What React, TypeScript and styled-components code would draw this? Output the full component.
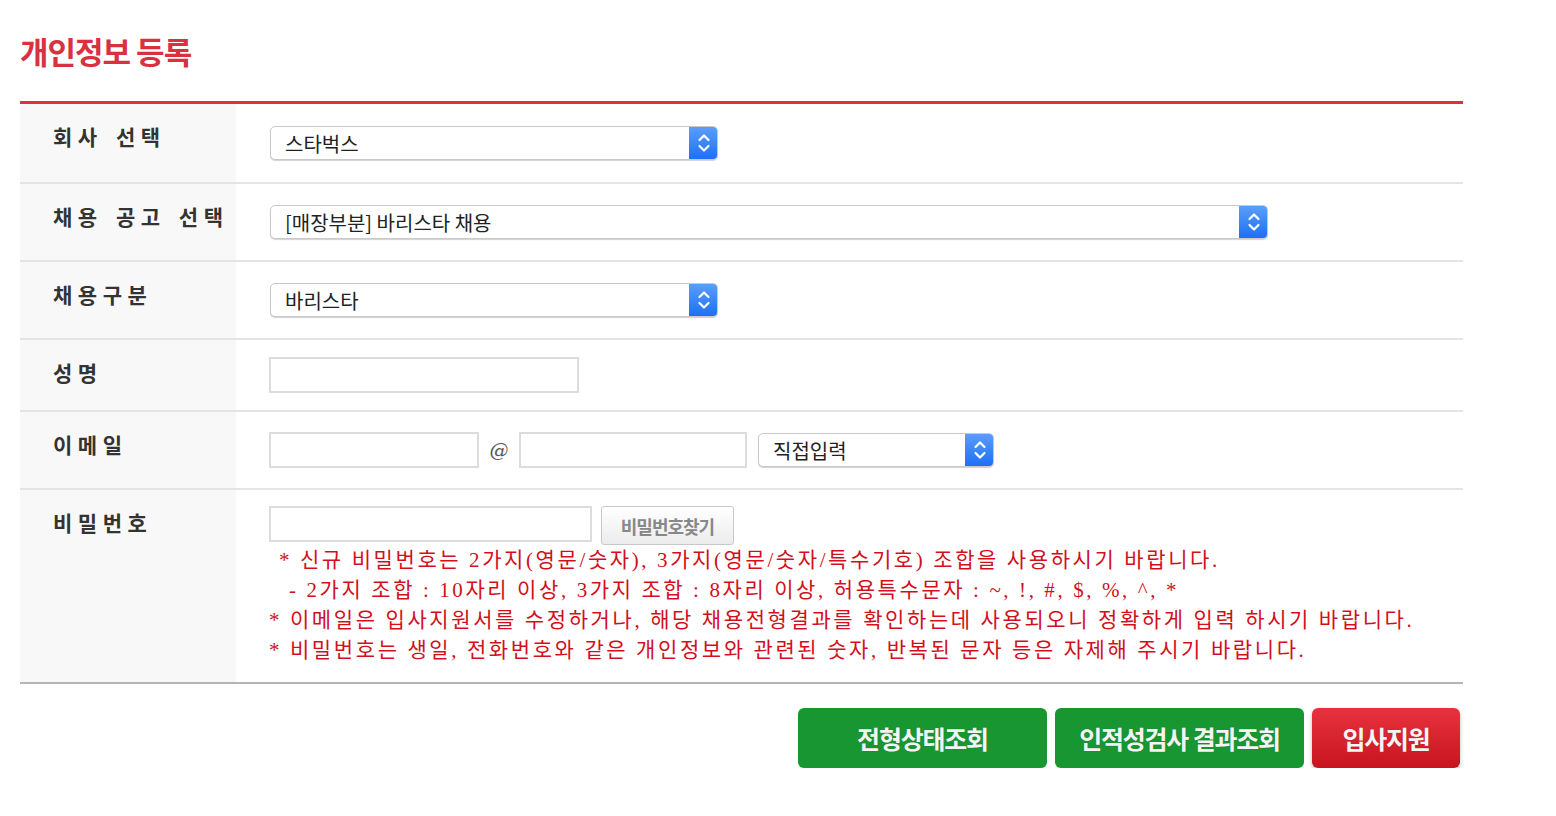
import React from "react";
import styled, { createGlobalStyle } from "styled-components";

const Global = createGlobalStyle`
  html, body { margin: 0; padding: 0; background: #fff; }
  body { font-family: "Noto Sans CJK KR", "Noto Sans", sans-serif; color: #222; }
  * { box-sizing: border-box; }
`;

const Page = styled.div`
  width: 1556px;
  padding: 0 0 0 20px;
`;

const Title = styled.h1`
  margin: 0;
  padding: 29px 0 0;
  height: 101px;
  font-size: 31px;
  line-height: 44px;
  font-weight: 700;
  letter-spacing: -1px;
  color: #d7323e;
`;

const Table = styled.div`
  width: 1443px;
  border-top: 3px solid #d7343f;
  border-bottom: 2px solid #b5b5b5;
`;

const Row = styled.div<{ $h: number; $last?: boolean }>`
  display: grid;
  grid-template-columns: 216px 1fr;
  height: ${(p) => p.$h}px;
  border-bottom: ${(p) => (p.$last ? "none" : "2px solid #e4e4e4")};
`;

const Label = styled.div`
  background: #f8f8f8;
  padding: 18px 0 0 33px;
  font-size: 21px;
  line-height: 28px;
  font-weight: 700;
  letter-spacing: 5.5px;
  word-spacing: 3px;
  color: #333;
`;

const Cell = styled.div<{ $top?: number }>`
  display: flex;
  align-items: ${(p) => (p.$top !== undefined ? "flex-start" : "center")};
  padding: ${(p) => (p.$top !== undefined ? `${p.$top}px 0 0 33px` : "0 0 0 33px")};
  gap: 10px;
`;

const SelectBox = styled.div<{ $w: number }>`
  position: relative;
  width: ${(p) => p.$w}px;
  height: 34px;
  margin-left: 1px;
  border: 1px solid #c9c9c9;
  border-radius: 5px;
  background: #fff;
  box-shadow: 0 1px 1px rgba(0, 0, 0, 0.18);
  display: flex;
  align-items: center;
  padding-left: 14px;
  font-size: 20px;
  color: #222;
  overflow: hidden;
`;

const Arrow = styled.div`
  position: absolute;
  top: -1px;
  right: -1px;
  bottom: -1px;
  width: 29px;
  border-radius: 0 5px 5px 0;
  background: linear-gradient(#5d9ff9, #1b6ff4);
  display: flex;
  align-items: center;
  justify-content: center;
`;

const TextInput = styled.div<{ $w: number; $h?: number }>`
  width: ${(p) => p.$w}px;
  height: ${(p) => p.$h ?? 36}px;
  border: 2px solid #dcdcdc;
  background: #fff;
`;

const At = styled.span`
  font-family: "DejaVu Serif", "Liberation Serif", serif;
  font-style: italic;
  font-size: 19px;
  color: #555;
  width: 20px;
  text-align: center;
`;

const PwLine = styled.div`
  display: flex;
  align-items: flex-start;
  gap: 9px;
`;

const FindBtn = styled.div`
  width: 133px;
  height: 39px;
  border: 1px solid #c8c8c8;
  border-radius: 3px;
  background: linear-gradient(#ffffff, #ececec);
  display: flex;
  align-items: center;
  justify-content: center;
  font-size: 18px;
  font-weight: 700;
  color: #888;
  letter-spacing: -1px;
`;

const PwCol = styled.div`
  display: flex;
  flex-direction: column;
`;

const Notes = styled.div`
  font-family: "Liberation Serif", "Noto Sans CJK KR", serif;
  font-size: 21px;
  line-height: 30px;
  color: #d20f1c;
  letter-spacing: 2.6px;
`;

const Note = styled.div<{ $indent: number }>`
  padding-left: ${(p) => p.$indent}px;
  white-space: nowrap;
`;

const Buttons = styled.div`
  width: 1443px;
  display: flex;
  justify-content: flex-end;
  gap: 8px;
  padding: 24px 3px 0 0;
`;

const ActionBtn = styled.div<{ $w: number; $red?: boolean }>`
  width: ${(p) => p.$w}px;
  height: 60px;
  border-radius: 6px;
  background: ${(p) =>
    p.$red ? "linear-gradient(#e8333f, #c8141f)" : "#189632"};
  box-shadow: ${(p) => (p.$red ? "0 2px 4px rgba(0,0,0,0.25)" : "0 1px 1px rgba(0,0,0,0.1)")};
  color: #f4f4f4;
  display: flex;
  align-items: center;
  justify-content: center;
  font-size: 25px;
  font-weight: 700;
  letter-spacing: -1.2px;
  text-shadow: 0 0 1px rgba(0, 0, 0, 0.2);
`;

const Chevrons = () => (
  <svg width="14" height="22" viewBox="0 0 14 22" fill="none">
    <path d="M2.5 8 L7 3.5 L11.5 8" stroke="#fff" strokeWidth="2.2" strokeLinecap="round" strokeLinejoin="round" />
    <path d="M2.5 14 L7 18.5 L11.5 14" stroke="#fff" strokeWidth="2.2" strokeLinecap="round" strokeLinejoin="round" />
  </svg>
);

const Select = ({ w, value }: { w: number; value: string }) => (
  <SelectBox $w={w}>
    {value}
    <Arrow>
      <Chevrons />
    </Arrow>
  </SelectBox>
);

export default function App() {
  return (
    <Page>
      <Global />
      <Title>개인정보 등록</Title>
      <Table>
        <Row $h={80}>
          <Label>회사 선택</Label>
          <Cell>
            <Select w={448} value="스타벅스" />
          </Cell>
        </Row>
        <Row $h={78}>
          <Label>채용 공고 선택</Label>
          <Cell>
            <Select w={998} value="[매장부분] 바리스타 채용" />
          </Cell>
        </Row>
        <Row $h={78}>
          <Label>채용구분</Label>
          <Cell>
            <Select w={448} value="바리스타" />
          </Cell>
        </Row>
        <Row $h={72}>
          <Label>성명</Label>
          <Cell>
            <TextInput $w={310} />
          </Cell>
        </Row>
        <Row $h={78}>
          <Label>이메일</Label>
          <Cell>
            <TextInput $w={210} />
            <At>@</At>
            <TextInput $w={228} />
            <Select w={236} value="직접입력" />
          </Cell>
        </Row>
        <Row $h={192} $last>
          <Label>비밀번호</Label>
          <Cell $top={16}>
            <PwCol>
              <PwLine>
                <TextInput $w={323} />
                <FindBtn>비밀번호찾기</FindBtn>
              </PwLine>
              <Notes>
                <Note $indent={10}>* 신규 비밀번호는 2가지(영문/숫자), 3가지(영문/숫자/특수기호) 조합을 사용하시기 바랍니다.</Note>
                <Note $indent={20}>- 2가지 조합 : 10자리 이상, 3가지 조합 : 8자리 이상, 허용특수문자 : ~, !, #, $, %, ^, *</Note>
                <Note $indent={0}>* 이메일은 입사지원서를 수정하거나, 해당 채용전형결과를 확인하는데 사용되오니 정확하게 입력 하시기 바랍니다.</Note>
                <Note $indent={0}>* 비밀번호는 생일, 전화번호와 같은 개인정보와 관련된 숫자, 반복된 문자 등은 자제해 주시기 바랍니다.</Note>
              </Notes>
            </PwCol>
          </Cell>
        </Row>
      </Table>
      <Buttons>
        <ActionBtn $w={249}>전형상태조회</ActionBtn>
        <ActionBtn $w={249}>인적성검사 결과조회</ActionBtn>
        <ActionBtn $w={148} $red>입사지원</ActionBtn>
      </Buttons>
    </Page>
  );
}
